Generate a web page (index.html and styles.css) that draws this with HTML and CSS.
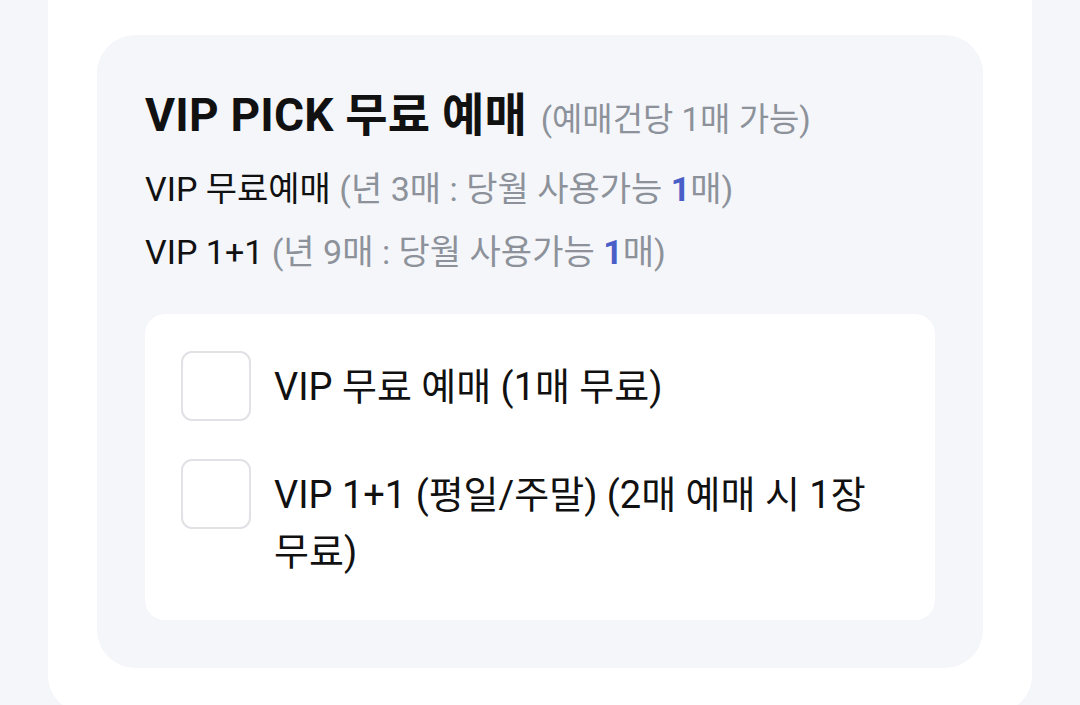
FILE: index.html
```html
<!DOCTYPE html>
<html lang="ko">
<head>
<meta charset="utf-8">
<link rel="stylesheet" href="styles.css">
</head>
<body>
<div class="card">
  <section class="box">
    <h2 class="title">VIP PICK 무료 예매 <span class="title-sub">(예매건당 1매 가능)</span></h2>
    <p class="line first">VIP 무료예매 <span class="muted">(년 3매 : 당월 사용가능 <b class="num">1</b>매)</span></p>
    <p class="line">VIP 1+1 <span class="muted">(년 9매 : 당월 사용가능 <b class="num">1</b>매)</span></p>
    <div class="inner">
      <label class="opt"><span class="check"></span><span class="opt-text">VIP 무료 예매 (1매 무료)</span></label>
      <label class="opt"><span class="check"></span><span class="opt-text">VIP 1+1 (평일/주말) (2매 예매 시 1장 무료)</span></label>
    </div>
  </section>
</div>
</body>
</html>
```
FILE: styles.css
```css
* { box-sizing: border-box; }
html, body { margin: 0; padding: 0; }
body {
  background: #f5f6fa;
  font-family: Roboto, "Noto Sans CJK KR", sans-serif;
  color: #111;
  width: 1080px;
  height: 705px;
  overflow: hidden;
}
.card {
  margin: 0 48px;
  background: #fff;
  border-radius: 0 0 36px 36px;
  padding: 35px 49px 44px;
}
.box {
  background: #f4f6fa;
  border-radius: 38px;
  padding: 48px 48px 48px;
}
.title {
  margin: 0;
  font-size: 46px;
  font-weight: 700;
  line-height: 64px;
  letter-spacing: 0.2px;
  white-space: nowrap;
}
.title-sub {
  font-size: 33px;
  font-weight: 400;
  line-height: 1;
  color: #8d929a;
  letter-spacing: 0;
  margin-left: 2px;
}
.line {
  margin: 0;
  font-size: 34px;
  line-height: 63px;
  white-space: nowrap;
}
.line.first { margin-top: 11px; }
.muted { color: #8d929a; }
.num { color: #4a5ec8; font-weight: 700; }
.inner {
  margin-top: 30px;
  background: #fff;
  border-radius: 20px;
  padding: 37px 36px 39px;
  display: flex;
  flex-direction: column;
  gap: 38px;
}
.opt {
  display: flex;
  align-items: flex-start;
  gap: 23px;
}
.check {
  flex: none;
  width: 70px;
  height: 70px;
  border: 2px solid #e1e2e5;
  border-radius: 11px;
  background: #fff;
}
.opt-text {
  font-size: 38px;
  line-height: 57px;
  padding-top: 8px;
  word-break: keep-all;
  flex: 1;
}
```
